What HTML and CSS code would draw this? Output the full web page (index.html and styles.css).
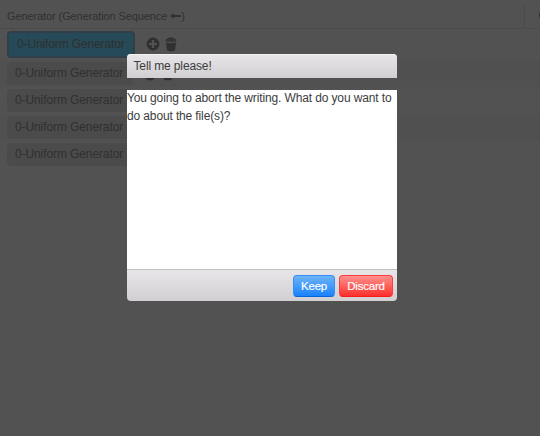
FILE: index.html
```html
<!DOCTYPE html>
<html lang="en">
<head>
<meta charset="utf-8">
<title>Generators</title>
<link rel="stylesheet" href="styles.css">
</head>
<body>
<svg class="defs" width="0" height="0">
  <symbol id="plus" viewBox="0 0 14 14"><path fill="currentColor" fill-rule="evenodd" d="M7 .6a6.4 6.4 0 1 0 0 12.8A6.4 6.4 0 0 0 7 .6zM5.9 3h2.2v2.9H11v2.2H8.100v2.9H5.900V8.100H3V5.900h2.900z"/></symbol>
  <symbol id="bin" viewBox="0 0 12 15"><path fill="currentColor" d="M.5 3.600C.5 2.200 2 2 2.500 1.400 3.300.2 4.700.9 5.500.5c1.500-.7 2 .6 3.200.7 1.200 0 1.200 1 2 1.300.6.300.8.700.8 1.300 0 .9-2.400 1.500-5.500 1.500S.5 4.500.5 3.600zM1 5.500c2.700 1.100 7.300 1.100 10 0L10 13c-.3 1.800-7.700 1.800-8 0z"/><path d="M2 3.800q4 1.600 8 0M3.500 2.600h1M7 2.400h1.200" stroke="#525252" stroke-width=".6" fill="none"/></symbol>
</svg>
<main class="page">
  <header class="heading">
    <div class="title"><span class="label">Generator (Generation Sequence</span><svg class="arrow" viewBox="0 0 11 8"><path fill="currentColor" d="M0 4l4-3v2h7v2H4v2z"/></svg>)</div>
    <div class="side"><span class="dot"></span></div>
  </header>
  <div class="row first"><span class="item selected">0-Uniform Generator</span><svg class="plus"><use href="#plus"/></svg><svg class="bin"><use href="#bin"/></svg></div>
  <div class="row alt"><span class="item">0-Uniform Generator</span><svg class="plus"><use href="#plus"/></svg><svg class="bin"><use href="#bin"/></svg></div>
  <div class="row"><span class="item">0-Uniform Generator</span></div>
  <div class="row alt"><span class="item">0-Uniform Generator</span></div>
  <div class="row"><span class="item">0-Uniform Generator</span></div>
</main>
<section class="dialog" role="dialog">
  <div class="dialog-head">Tell me please!</div>
  <div class="dialog-body">You going to abort the writing. What do you want to do about the file(s)?</div>
  <footer class="dialog-foot"><button class="btn keep">Keep</button><button class="btn discard">Discard</button></footer>
</section>
</body>
</html>
```
FILE: styles.css
```css
* { box-sizing: border-box; }
body {
  margin: 0;
  height: 436px;
  overflow: hidden;
  background: #525252;
  color: #303030;
  font: 12px/18px "Liberation Sans", Arial, sans-serif;
}
.defs { position: absolute; }
.page { padding-top: 4px; }
.heading {
  display: flex;
  height: 25px;
  border-bottom: 1px solid #4c4c4c;
  font-size: 11px;
  line-height: 24px;
}
.title { display: flex; align-items: center; flex: 1; padding-left: 7px; }
.label { letter-spacing: -0.1px; }
.arrow { width: 11px; height: 8px; margin-left: 3px; }
.side { width: 16px; border-left: 1px solid #494949; overflow: hidden; }
.dot {
  display: block;
  width: 12px;
  height: 12px;
  margin: 5px 0 0 14px;
  border-radius: 50%;
  background: #2d2d2d;
}
.row { display: flex; align-items: center; height: 27px; padding-left: 7px; }
.row.first { height: 31px; }
.row.alt { background: #505050; }
.item {
  width: 125px;
  height: 23px;
  padding-left: 8px;
  border-radius: 4px;
  background: #4b4b4b;
  line-height: 22px;
  letter-spacing: -0.1px;
  white-space: nowrap;
}
.selected {
  width: 128px;
  height: 27px;
  border: 2px solid #303f49;
  background: #264a57;
  line-height: 23px;
  letter-spacing: -0.13px;
}
.plus { width: 14px; height: 14px; margin-left: 11px; }
.bin { width: 12px; height: 15px; margin-left: 5px; }
.row.first .plus { margin-top: -1px; margin-left: 10.5px; }
.dialog {
  position: absolute;
  left: 127px;
  top: 54px;
  width: 270px;
  display: flex;
  flex-direction: column;
  color: #3c3c3c;
  letter-spacing: -0.13px;
}
.dialog-head {
  height: 24px;
  padding: 3px 6.500px;
  border-radius: 4px 4px 0 0;
  background: linear-gradient(#e8e6e8, #d1cfd1);
  box-shadow: inset 0 1px 0 #f5f4f5;
}
.dialog-body {
  height: 179px;
  margin-top: 12px;
  background: #fff;
  line-height: 17.6px;
}
.dialog-foot {
  display: flex;
  justify-content: flex-end;
  gap: 4px;
  height: 32px;
  padding: 5px 4px 5px;
  border-top: 1px solid #c2c0c2;
  border-radius: 0 0 4px 4px;
  background: linear-gradient(#e8e6e8, #d1cfd1);
}
.btn {
  height: 22px;
  padding: 0;
  border: 1px solid;
  border-radius: 4px;
  color: #fff;
  font: 11.5px/18px "Liberation Sans", Arial, sans-serif;
  letter-spacing: -0.2px;
  -webkit-text-stroke: .2px #fff;
}
.keep {
  width: 42px;
  border-color: #388df8 #388df8 #0866dc;
  background: linear-gradient(#6eb4f7, #1a82fb);
}
.discard {
  width: 54px;
  border-color: #fc3d39 #fc3d39 #f71c18;
  background: linear-gradient(#fd918d, #fc302c);
}
```
